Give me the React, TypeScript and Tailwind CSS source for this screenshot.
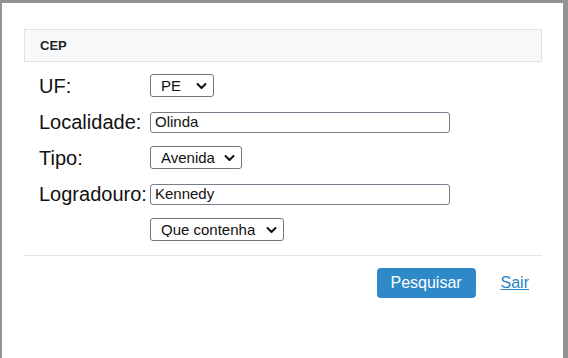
import { useState } from 'react';

function Chevron() {
  return (
    <svg className="pointer-events-none absolute right-[7px] top-1/2 -translate-y-1/2" width="11" height="7" viewBox="0 0 11 7" fill="none" stroke="#111" strokeWidth="2" strokeLinecap="round" strokeLinejoin="round">
      <path d="M1.5 1.5 L5.5 5.5 L9.5 1.5" />
    </svg>
  );
}

function Select({ value, options, width, onChange }: { value: string; options: string[]; width: string; onChange: (v: string) => void }) {
  return (
    <div className={`relative ${width}`}>
      <select
        value={value}
        onChange={(e) => onChange(e.target.value)}
        className="h-[23px] w-full appearance-none rounded-[3px] border border-[#767676] bg-white pl-[10px] pr-6 text-[15px] leading-none text-[#111] outline-none"
      >
        {options.map((o) => <option key={o}>{o}</option>)}
      </select>
      <Chevron />
    </div>
  );
}

function Row({ label, children }: { label?: string; children: React.ReactNode }) {
  return (
    <div className="flex h-9 items-center">
      <span className="w-[111px] text-[20px] text-[#111]">{label}</span>
      {children}
    </div>
  );
}

export default function App() {
  const [uf, setUf] = useState('PE');
  const [localidade, setLocalidade] = useState('Olinda');
  const [tipo, setTipo] = useState('Avenida');
  const [logradouro, setLogradouro] = useState('Kennedy');
  const [modo, setModo] = useState('Que contenha');

  return (
    <div className="h-[358px] w-[568px] bg-[#939393] pl-[2px] pr-[5px] pt-[3px]" style={{ fontFamily: '"Liberation Sans", Arial, sans-serif' }}>
      <div className="h-full bg-white pl-[22px] pt-[26px]">
        <div className="w-[518px]">
          <div className="flex h-[33px] items-center border border-[#dfe3e8] bg-[#f8f9fa] pl-[15px] text-[13px] font-bold text-[#212529]">
            CEP
          </div>

          <div className="mt-[6px] pl-[15px]">
            <Row label="UF:">
              <Select value={uf} options={['PE', 'PB', 'AL', 'BA']} width="w-[64px]" onChange={setUf} />
            </Row>
            <Row label="Localidade:">
              <input
                value={localidade}
                onChange={(e) => setLocalidade(e.target.value)}
                className="h-[21px] w-[300px] rounded-[3px] border border-[#767e8c] px-[4px] text-[15px] text-[#111] outline-none"
              />
            </Row>
            <Row label="Tipo:">
              <Select value={tipo} options={['Avenida', 'Rua', 'Travessa']} width="w-[92px]" onChange={setTipo} />
            </Row>
            <Row label="Logradouro:">
              <input
                value={logradouro}
                onChange={(e) => setLogradouro(e.target.value)}
                className="h-[21px] w-[300px] rounded-[3px] border border-[#767e8c] px-[4px] text-[15px] text-[#111] outline-none"
              />
            </Row>
            <Row>
              <Select value={modo} options={['Que contenha', 'Que comece com', 'Igual a']} width="w-[134px]" onChange={setModo} />
            </Row>
          </div>

          <div className="mt-[7px] border-t border-[#dfe6ee]" />

          <div className="mt-[12px] flex items-center justify-end pr-[13px]">
            <button type="button" className="h-[30px] w-[99px] rounded-[4px] bg-[#2e89c8] text-[16px] text-white">
              Pesquisar
            </button>
            <a href="#" className="ml-[25px] text-[16px] text-[#2a85c5] underline">Sair</a>
          </div>
        </div>
      </div>
    </div>
  );
}
